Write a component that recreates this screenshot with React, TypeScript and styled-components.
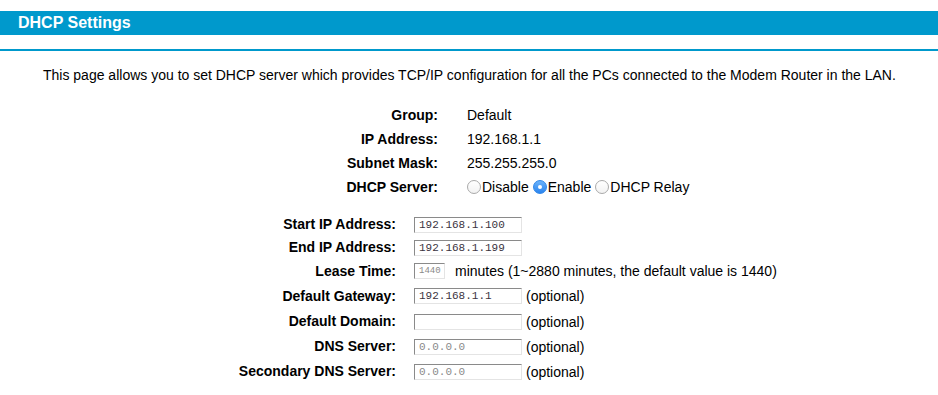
import React from "react"
import styled, { createGlobalStyle } from "styled-components"

const GlobalStyle = createGlobalStyle`
  html, body {
    margin: 0;
    padding: 0;
    background: #fff;
  }
  body {
    font-family: "Liberation Sans", Arial, sans-serif;
    font-size: 14px;
    color: #000;
  }
`

const Page = styled.div`
  width: 938px;
  height: 395px;
  padding-top: 11px;
  box-sizing: border-box;
  overflow: hidden;
`

const TitleBar = styled.div`
  height: 24px;
  background: #0099cc;
  color: #fff;
  font-weight: bold;
  font-size: 16px;
  line-height: 24px;
  padding-left: 18px;
`

const Rule = styled.div`
  height: 2px;
  background: #0099cc;
  margin-top: 14px;
`

const Intro = styled.p`
  margin: 16px 0 0 43px;
  line-height: 16px;
`

const InfoGrid = styled.div`
  display: grid;
  grid-template-columns: 200px auto;
  grid-auto-rows: 24px;
  column-gap: 29px;
  align-items: center;
  margin: 20px 0 0 238px;
`

const FormGrid = styled.div`
  display: grid;
  grid-template-columns: 250px auto;
  column-gap: 18px;
  align-items: center;
  margin: 14px 0 0 146px;
`

const Label = styled.div<{ $h?: number }>`
  font-weight: bold;
  text-align: right;
  white-space: nowrap;
  height: ${(p) => p.$h ?? 24}px;
  line-height: ${(p) => p.$h ?? 24}px;
`

const Value = styled.div<{ $h?: number }>`
  display: flex;
  align-items: center;
  white-space: nowrap;
  height: ${(p) => p.$h ?? 24}px;
`

const RadioItem = styled.span`
  display: inline-flex;
  align-items: center;
  margin-right: 4px;
`

const RadioDot = styled.span<{ $on?: boolean }>`
  width: 14px;
  height: 14px;
  box-sizing: border-box;
  border-radius: 50%;
  margin-right: 1px;
  display: inline-flex;
  align-items: center;
  justify-content: center;
  border: 1px solid ${(p) => (p.$on ? "#2f86e8" : "#a9a9a9")};
  background: ${(p) =>
    p.$on ? "linear-gradient(#6cb3fa, #2a84ef)" : "linear-gradient(#fff, #f2f2f2)"};

  &::after {
    content: "";
    display: ${(p) => (p.$on ? "block" : "none")};
    width: 4px;
    height: 4px;
    border-radius: 50%;
    background: #fff;
  }
`

const Field = styled.div<{ $w: number; $muted?: boolean; $small?: boolean }>`
  width: ${(p) => p.$w}px;
  height: 16px;
  box-sizing: border-box;
  border-top: 1px solid #8a8a8a;
  border-left: 1px solid #8a8a8a;
  border-right: 1px solid #e4e4e4;
  border-bottom: 1px solid #e4e4e4;
  font-family: "Liberation Mono", "Courier New", monospace;
  font-size: ${(p) => (p.$small ? 9 : 11)}px;
  line-height: 14px;
  padding-left: 4px;
  color: ${(p) => (p.$muted ? "#8a8a8a" : "#3a3340")};
  margin-right: 4px;
`

const Note = styled.span`
  margin-left: 6px;
`

type FormRow = {
  label: string
  value?: string
  width: number
  muted?: boolean
  small?: boolean
  after?: string
  h: number
}

const formRows: FormRow[] = [
  { label: "Start IP Address:", value: "192.168.1.100", width: 108, h: 23 },
  { label: "End IP Address:", value: "192.168.1.199", width: 108, h: 23 },
  {
    label: "Lease Time:",
    value: "1440",
    width: 31,
    muted: true,
    small: true,
    after: " minutes (1~2880 minutes, the default value is 1440)",
    h: 24,
  },
  { label: "Default Gateway:", value: "192.168.1.1", width: 108, after: "(optional)", h: 26 },
  { label: "Default Domain:", value: "", width: 108, after: "(optional)", h: 25 },
  { label: "DNS Server:", value: "0.0.0.0", width: 108, muted: true, after: "(optional)", h: 25 },
  { label: "Secondary DNS Server:", value: "0.0.0.0", width: 108, muted: true, after: "(optional)", h: 25 },
]

export default function App() {
  return (
    <Page>
      <GlobalStyle />
      <TitleBar>DHCP Settings</TitleBar>
      <Rule />
      <Intro>
        This page allows you to set DHCP server which provides TCP/IP configuration for all the PCs
        connected to the Modem Router in the LAN.
      </Intro>

      <InfoGrid>
        <Label>Group:</Label>
        <Value>Default</Value>
        <Label>IP Address:</Label>
        <Value>192.168.1.1</Value>
        <Label>Subnet Mask:</Label>
        <Value>255.255.255.0</Value>
        <Label>DHCP Server:</Label>
        <Value>
          <RadioItem>
            <RadioDot />
            Disable
          </RadioItem>
          <RadioItem>
            <RadioDot $on />
            Enable
          </RadioItem>
          <RadioItem>
            <RadioDot />
            DHCP Relay
          </RadioItem>
        </Value>
      </InfoGrid>

      <FormGrid>
        {formRows.map((r) => (
          <React.Fragment key={r.label}>
            <Label $h={r.h}>{r.label}</Label>
            <Value $h={r.h}>
              <Field $w={r.width} $muted={r.muted} $small={r.small}>
                {r.value}
              </Field>
              {r.after && (r.after.startsWith(" ") ? <Note>{r.after.trim()}</Note> : r.after)}
            </Value>
          </React.Fragment>
        ))}
      </FormGrid>
    </Page>
  )
}
